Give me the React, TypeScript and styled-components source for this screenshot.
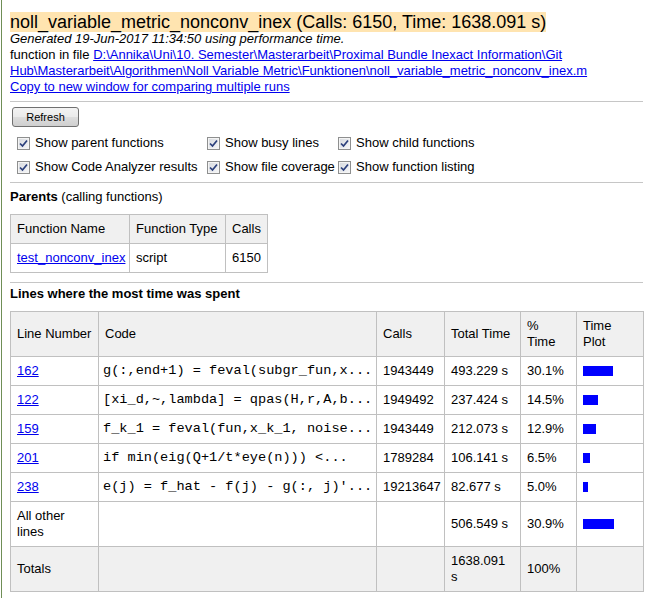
import React from 'react';
import styled, { createGlobalStyle } from 'styled-components';

const GlobalStyle = createGlobalStyle`
  html, body { margin: 0; padding: 0; background: #ffffff; }
  body {
    font-family: "Liberation Sans", Arial, sans-serif;
    font-size: 13px;
    line-height: 16px;
    color: #000000;
  }
`;

const Page = styled.div`
  margin-left: 1px;
  border-left: 1px solid #6f8e56;
  padding: 13px 6px 6px 8px;
  min-height: 598px;
  box-sizing: border-box;
`;

const Title = styled.div`
  font-size: 18px;
  line-height: 18px;
  white-space: nowrap;
`;

const TitleMark = styled.span`
  background: #ffe4b0;
`;

const InfoLine = styled.div<{ $italic?: boolean }>`
  font-style: ${(p) => (p.$italic ? 'italic' : 'normal')};
  white-space: nowrap;
`;

const Link = styled.a`
  color: #0000ee;
  text-decoration: underline;
  cursor: pointer;
`;

const Rule = styled.div<{ $top: number }>`
  border-top: 1px solid #c6c6c6;
  margin-top: ${(p) => p.$top}px;
`;

const RefreshButton = styled.button`
  display: block;
  margin: 5px 0 0 2px;
  width: 67px;
  height: 20px;
  padding: 0;
  border: 1px solid #707070;
  border-radius: 3px;
  background: linear-gradient(#f3f3f3 0%, #ebebeb 48%, #dddddd 52%, #cfcfcf 100%);
  font-family: "Liberation Sans", Arial, sans-serif;
  font-size: 11px;
  color: #000000;
`;

const Options = styled.div`
  display: grid;
  grid-template-columns: 190px 131px auto;
  grid-auto-rows: 24px;
  align-items: center;
  padding-left: 7px;
  margin-top: 4px;
`;

const Option = styled.label`
  display: flex;
  align-items: center;
  gap: 5px;
  white-space: nowrap;
`;

const Box = styled.span`
  width: 13px;
  height: 13px;
  box-sizing: border-box;
  border: 1px solid #8e8f8f;
  background: linear-gradient(135deg, #d6d9de 0%, #f6f7f9 100%);
  box-shadow: inset 0 0 0 1px #f4f4f4;
  display: flex;
  align-items: center;
  justify-content: center;
`;

const Heading = styled.div<{ $top: number }>`
  margin-top: ${(p) => p.$top}px;
`;

const Bold = styled.b`
  font-weight: bold;
`;

const Table = styled.table<{ $width: number; $top: number }>`
  border-collapse: collapse;
  table-layout: fixed;
  width: ${(p) => p.$width}px;
  margin-top: ${(p) => p.$top}px;
`;

const Col = styled.col<{ $w: number }>`
  width: ${(p) => p.$w}px;
`;

const Th = styled.th`
  background: #f0f0f0;
  font-weight: normal;
  text-align: left;
  vertical-align: middle;
  border: 1px solid #c0c0c0;
  padding: 6px;
  line-height: 16px;
  white-space: nowrap;
`;

const Td = styled.td<{ $shade?: boolean }>`
  background: ${(p) => (p.$shade ? '#f0f0f0' : '#ffffff')};
  text-align: left;
  vertical-align: middle;
  border: 1px solid #c0c0c0;
  padding: 6px;
  line-height: 16px;
  white-space: nowrap;
`;

const CodeTd = styled(Td)`
  font-family: "Liberation Mono", "Courier New", monospace;
  font-size: 13.6px;
  white-space: pre;
  padding-left: 4px;
`;

const Bar = styled.div`
  height: 10px;
  margin: 3px 0;
  background: #0000ff;
`;

const Check = () => (
  <Box>
    <svg width="9" height="9" viewBox="0 0 9 9">
      <path d="M1 4.5 L3.5 7 L8 1.5" fill="none" stroke="#2b3f7c" strokeWidth="1.7" />
    </svg>
  </Box>
);

const options = [
  'Show parent functions',
  'Show busy lines',
  'Show child functions',
  'Show Code Analyzer results',
  'Show file coverage',
  'Show function listing',
];

type Line = { line: string; code: string; calls: string; time: string; pct: number };

const lines: Line[] = [
  { line: '162', code: 'g(:,end+1) = feval(subgr_fun,x...', calls: '1943449', time: '493.229 s', pct: 30.1 },
  { line: '122', code: '[xi_d,~,lambda] = qpas(H,r,A,b...', calls: '1949492', time: '237.424 s', pct: 14.5 },
  { line: '159', code: 'f_k_1 = feval(fun,x_k_1, noise...', calls: '1943449', time: '212.073 s', pct: 12.9 },
  { line: '201', code: 'if min(eig(Q+1/t*eye(n))) <...', calls: '1789284', time: '106.141 s', pct: 6.5 },
  { line: '238', code: "e(j) = f_hat - f(j) - g(:, j)'...", calls: '19213647', time: '82.677 s', pct: 5.0 },
];

export default function App() {
  return (
    <>
      <GlobalStyle />
      <Page>
        <Title>
          <TitleMark>noll_variable_metric_nonconv_inex (Calls: 6150, Time: 1638.091 s)</TitleMark>
        </Title>
        <InfoLine $italic>Generated 19-Jun-2017 11:34:50 using performance time.</InfoLine>
        <InfoLine>
          function in file{' '}
          <Link>D:\Annika\Uni\10. Semester\Masterarbeit\Proximal Bundle Inexact Information\Git </Link>
        </InfoLine>
        <InfoLine>
          <Link>Hub\Masterarbeit\Algorithmen\Noll Variable Metric\Funktionen\noll_variable_metric_nonconv_inex.m</Link>
        </InfoLine>
        <InfoLine>
          <Link>Copy to new window for comparing multiple runs</Link>
        </InfoLine>

        <Rule $top={6} />
        <RefreshButton type="button">Refresh</RefreshButton>
        <Options>
          {options.map((o) => (
            <Option key={o}>
              <Check />
              {o}
            </Option>
          ))}
        </Options>

        <Rule $top={3} />
        <Heading $top={6}>
          <Bold>Parents</Bold> (calling functions)
        </Heading>
        <Table $width={257} $top={9}>
          <colgroup>
            <Col $w={119} />
            <Col $w={96} />
            <Col $w={42} />
          </colgroup>
          <thead>
            <tr>
              <Th>Function Name</Th>
              <Th>Function Type</Th>
              <Th>Calls</Th>
            </tr>
          </thead>
          <tbody>
            <tr>
              <Td>
                <Link>test_nonconv_inex</Link>
              </Td>
              <Td>script</Td>
              <Td>6150</Td>
            </tr>
          </tbody>
        </Table>

        <Rule $top={9} />
        <Heading $top={3}>
          <Bold>Lines where the most time was spent</Bold>
        </Heading>
        <Table $width={633} $top={9}>
          <colgroup>
            <Col $w={88} />
            <Col $w={278} />
            <Col $w={68} />
            <Col $w={76} />
            <Col $w={56} />
            <Col $w={67} />
          </colgroup>
          <thead>
            <tr>
              <Th>Line Number</Th>
              <Th>Code</Th>
              <Th>Calls</Th>
              <Th>Total Time</Th>
              <Th>
                %<br />
                Time
              </Th>
              <Th>
                Time<br />
                Plot
              </Th>
            </tr>
          </thead>
          <tbody>
            {lines.map((l) => (
              <tr key={l.line}>
                <Td>
                  <Link>{l.line}</Link>
                </Td>
                <CodeTd>{l.code}</CodeTd>
                <Td>{l.calls}</Td>
                <Td>{l.time}</Td>
                <Td>{l.pct.toFixed(1)}%</Td>
                <Td>
                  <Bar style={{ width: `${Math.round(l.pct)}px` }} />
                </Td>
              </tr>
            ))}
            <tr>
              <Td>
                All other<br />
                lines
              </Td>
              <Td />
              <Td />
              <Td>506.549 s</Td>
              <Td>30.9%</Td>
              <Td>
                <Bar style={{ width: '31px' }} />
              </Td>
            </tr>
            <tr>
              <Td $shade>Totals</Td>
              <Td $shade />
              <Td $shade />
              <Td $shade>
                1638.091<br />s
              </Td>
              <Td $shade>100%</Td>
              <Td $shade />
            </tr>
          </tbody>
        </Table>
      </Page>
    </>
  );
}
